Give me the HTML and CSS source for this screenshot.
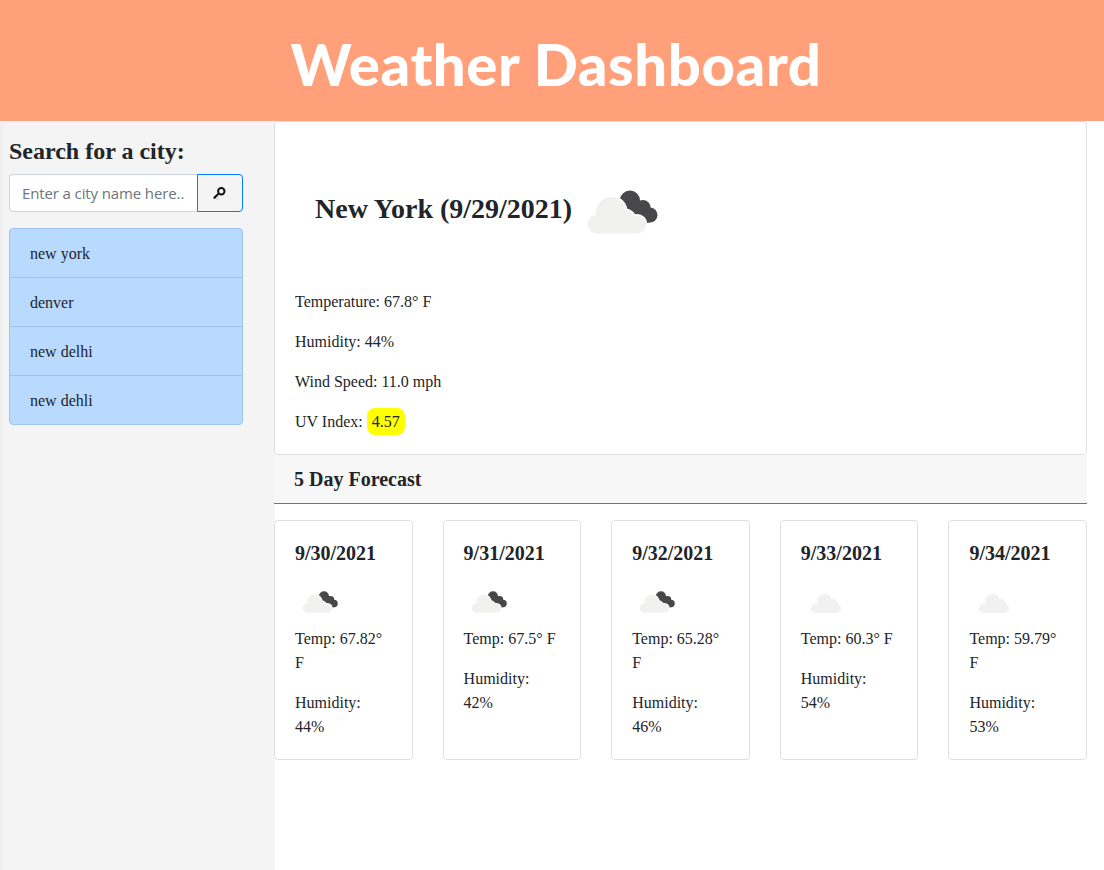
FILE: index.html
```html
<!DOCTYPE html>
<html lang="en">
<head>
    <meta charset="UTF-8">
    <meta name="viewport" content="width=device-width, initial-scale=1.0">
    <title>Weather Dashboard</title>
    <link rel="stylesheet" href="styles.css">
</head>
<body>
    <svg class="icon-defs" aria-hidden="true">
        <symbol id="broken-clouds" viewBox="0 0 100 100">
            <g fill="#48484a">
                <circle cx="58" cy="42.500" r="10"/>
                <circle cx="71" cy="49.500" r="7.500"/>
                <circle cx="78" cy="57" r="7.500"/>
                <polygon points="50,37 72,44 82,63 72,66 60,62 46,44"/>
            </g>
            <g fill="#fff" stroke="#fff" stroke-width="3">
                <circle cx="25" cy="66" r="9.500"/>
                <circle cx="39" cy="54" r="15"/>
                <circle cx="53" cy="62" r="10"/>
                <circle cx="65" cy="66.500" r="9"/>
                <rect x="25" y="62" width="40" height="13.500"/>
            </g>
            <g fill="#f1f1ef">
                <circle cx="25" cy="66" r="9.500"/>
                <circle cx="39" cy="54" r="15"/>
                <circle cx="53" cy="62" r="10"/>
                <circle cx="65" cy="66.500" r="9"/>
                <rect x="25" y="62" width="40" height="13.500"/>
            </g>
        </symbol>
        <symbol id="few-clouds" viewBox="0 0 100 100">
            <g fill="#f1f1f1">
                <circle cx="29" cy="66.500" r="9.500"/>
                <circle cx="47" cy="52" r="14"/>
                <circle cx="64" cy="58" r="10"/>
                <circle cx="71" cy="67" r="9"/>
                <rect x="29" y="60" width="42" height="16"/>
            </g>
        </symbol>
    </svg>

    <header class="site-header">
        <h1>Weather Dashboard</h1>
    </header>

    <div class="layout">
        <aside class="sidebar">
            <h2>Search for a city:</h2>
            <form class="search-group">
                <input type="text" placeholder="Enter a city name here...">
                <button type="button" aria-label="Search">
                    <svg width="16" height="16" viewBox="0 0 16 16">
                        <path d="M2.500 14.500l2 .8 3-2-1-1.500z" fill="#ddd"/>
                        <path d="M2.400 12.800l3.300-3.400" stroke="#111" stroke-width="2.200" stroke-linecap="round" fill="none"/>
                        <circle cx="9.300" cy="6.200" r="3.200" stroke="#111" stroke-width="2" fill="#f5f5f5"/>
                    </svg>
                </button>
            </form>
            <ul class="city-list">
                <li>new york</li>
                <li>denver</li>
                <li>new delhi</li>
                <li>new dehli</li>
            </ul>
        </aside>

        <main class="content">
            <section class="current">
                <div class="current-title">
                    <h2>New York (9/29/2021)</h2>
                    <svg class="icon-large"><use href="#broken-clouds"/></svg>
                </div>
                <p>Temperature: 67.8° F</p>
                <p>Humidity: 44%</p>
                <p>Wind Speed: 11.0 mph</p>
                <p>UV Index: <span class="uv-badge">4.57</span></p>
            </section>

            <h3 class="forecast-header">5 Day Forecast</h3>

            <section class="forecast">
                <div class="day-card">
                    <h4>9/30/2021</h4>
                    <svg class="icon-small"><use href="#broken-clouds"/></svg>
                    <p>Temp: 67.82° F</p>
                    <p>Humidity: 44%</p>
                </div>
                <div class="day-card">
                    <h4>9/31/2021</h4>
                    <svg class="icon-small"><use href="#broken-clouds"/></svg>
                    <p>Temp: 67.5° F</p>
                    <p>Humidity: 42%</p>
                </div>
                <div class="day-card">
                    <h4>9/32/2021</h4>
                    <svg class="icon-small"><use href="#broken-clouds"/></svg>
                    <p>Temp: 65.28° F</p>
                    <p>Humidity: 46%</p>
                </div>
                <div class="day-card">
                    <h4>9/33/2021</h4>
                    <svg class="icon-small"><use href="#few-clouds"/></svg>
                    <p>Temp: 60.3° F</p>
                    <p>Humidity: 54%</p>
                </div>
                <div class="day-card">
                    <h4>9/34/2021</h4>
                    <svg class="icon-small"><use href="#few-clouds"/></svg>
                    <p>Temp: 59.79° F</p>
                    <p>Humidity: 53%</p>
                </div>
            </section>
        </main>
    </div>
</body>
</html>
```

FILE: styles.css
```css
* {
    box-sizing: border-box;
}
body {
    margin: 0;
    min-height: 100vh;
    display: flex;
    flex-direction: column;
    font-family: "Liberation Serif", "Times New Roman", serif;
    font-size: 16px;
    line-height: 1.5;
    color: #212529;
    background: #fff;
}
p {
    margin: 0 0 16px;
}
.icon-defs {
    display: none;
}

.site-header {
    height: 121px;
    padding: 6px 0 0 8px;
    background: #ffa07a;
    display: flex;
    align-items: center;
    justify-content: center;
}
.site-header h1 {
    margin: 0;
    font-family: Lato, "Open Sans", sans-serif;
    font-size: 58px;
    font-weight: 900;
    letter-spacing: 0.6px;
    line-height: 1.2;
    color: #fff;
}

.layout {
    flex: 1;
    display: flex;
    align-items: stretch;
}

.sidebar {
    width: 275px;
    flex: none;
    margin-right: -1px;
    background: linear-gradient(to right, #eeeeee, #f4f4f4 6px);
    padding: 14px 32px 0 9px;
}
.sidebar h2 {
    margin: 0 0 7px;
    font-size: 24px;
    font-weight: 700;
    line-height: 32px;
}
.search-group {
    display: flex;
    height: 38px;
    margin-bottom: 16px;
}
.search-group input {
    flex: 1;
    min-width: 0;
    padding: 6px 12px;
    border: 1px solid #ced4da;
    border-right: 0;
    border-radius: 4px 0 0 4px;
    background: #fff;
    font-family: "Open Sans", "Noto Sans", sans-serif;
    font-size: 15px;
    letter-spacing: -0.12px;
}
.search-group input::placeholder {
    color: #6c757d;
}
.search-group button {
    width: 46px;
    flex: none;
    padding: 0;
    display: flex;
    align-items: center;
    justify-content: center;
    border: 1px solid #007bff;
    border-radius: 0 4px 4px 0;
    background: transparent;
}

.city-list {
    margin: 0;
    padding: 0;
    list-style: none;
    background: #b8daff;
    border: 1px solid #9cc4ef;
    border-radius: 4px;
}
.city-list li {
    height: 49px;
    padding: 13px 20px 11px;
    border-bottom: 1px solid #9cc4ef;
}
.city-list li:last-child {
    height: 48px;
    border-bottom: 0;
}

.content {
    width: 813px;
    flex: none;
    position: relative;
}
.current {
    height: 334px;
    padding: 20px;
    background: #fff;
    border: 1px solid #dfdfdf;
    border-radius: 4px;
}
.current-title {
    height: 148px;
    padding: 16px 20px 0;
    display: flex;
    align-items: flex-start;
}
.current-title h2 {
    margin: 34px 0 0;
    font-size: 28px;
    font-weight: 700;
    line-height: 34px;
}
.icon-large {
    width: 100px;
    height: 100px;
    flex: none;
}
.current p:last-child {
    margin-bottom: 0;
}
.uv-badge {
    padding: 5px;
    background: #ff0;
    border-radius: 8px;
}

.forecast-header {
    margin: 0;
    height: 49px;
    padding: 12px 20px;
    font-size: 20px;
    font-weight: 700;
    line-height: 24px;
    background: #f7f7f7;
    border-bottom: 1px solid #6c757d;
}

.forecast {
    display: flex;
    gap: 30px;
    margin-top: 16px;
}
.day-card {
    flex: 1;
    min-width: 0;
    padding: 20px;
    background: #fff;
    border: 1px solid #dfdfdf;
    border-radius: 4px;
}
.day-card h4 {
    margin: 0 0 10px;
    font-size: 20px;
    font-weight: 700;
    line-height: 24px;
}
.icon-small {
    display: block;
    width: 50px;
    height: 50px;
    margin-bottom: 2px;
}
.day-card p:last-child {
    margin-bottom: 0;
}
```
